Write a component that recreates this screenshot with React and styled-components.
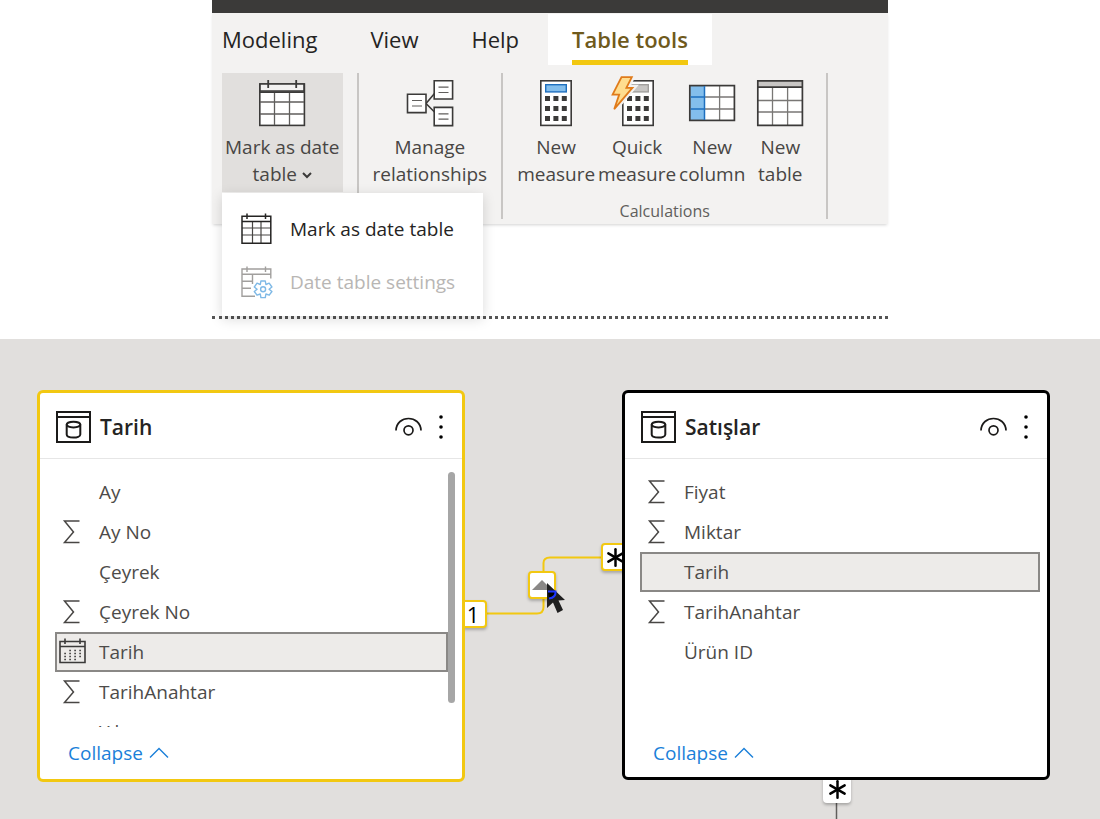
import React from 'react';
import styled, { createGlobalStyle } from 'styled-components';
import { Asterisk } from 'lucide-react';

const GlobalStyle = createGlobalStyle`
    * {
        box-sizing: border-box;
    }
    body {
        margin: 0;
        background-color: #fff;
        font-family: "Open Sans", "Noto Sans", sans-serif;
        color: #252423;
    }
    button {
        margin: 0;
        padding: 0;
        border: none;
        background: none;
        font: inherit;
        color: inherit;
        cursor: pointer;
    }
    svg {
        display: block;
        flex-shrink: 0;
        overflow: visible;
    }
`;

const Page = styled.div`
    display: flex;
    flex-direction: column;
    min-height: 100vh;
`;

const Top = styled.header`
    width: 100%;
    max-width: 676px;
    margin: 0 auto 20px;
    padding-bottom: 92px;
    border-bottom: 3px dotted #555;
`;

const TitleBar = styled.div`
    height: 13px;
    background-color: #3b3a39;
`;

const Ribbon = styled.div`
    background-color: #f3f2f1;
    box-shadow: 0 2px 3px -1px rgba(0, 0, 0, 0.18);
`;

const Tabs = styled.nav`
    display: flex;
    gap: 5px;
    padding-top: 1px;
`;

const Tab = styled.button`
    height: 51px;
    padding: 0 24px;
    font-size: 22px;
    line-height: 50px;
    font-weight: ${props => (props.$active ? 600 : 400)};
    color: ${props => (props.$active ? '#6f5a1c' : '#252423')};
    background-color: ${props => (props.$active ? '#fff' : 'transparent')};
    &:first-child {
        padding-left: 10px;
    }
    & > span {
        display: block;
        height: 51px;
        border-bottom: 5px solid ${props => (props.$active ? '#f2c811' : 'transparent')};
    }
`;

const Groups = styled.div`
    display: flex;
    padding: 8px 0 5px 10px;
`;

const Group = styled.section`
    position: relative;
    height: 146px;
    padding: 0 ${props => props.$gap}px;
    border-right: 2px solid #c8c6c4;
    &:first-child {
        padding-left: 0;
    }
`;

const GroupButtons = styled.div`
    display: flex;
    gap: 3px;
`;

const GroupName = styled.div`
    margin-top: 8px;
    font-size: 16px;
    line-height: 22px;
    text-align: center;
    color: #605e5c;
`;

const RibbonButton = styled.button`
    display: flex;
    flex-direction: column;
    align-items: center;
    gap: 7px;
    min-width: 64px;
    padding: 6px ${props => (props.$open ? 3 : 0)}px 4px;
    font-size: 19px;
    line-height: 27px;
    white-space: nowrap;
    color: #484644;
    background-color: ${props => (props.$open ? '#e1dfdd' : 'transparent')};
`;

const WithChevron = styled.span`
    display: flex;
    align-items: center;
    justify-content: center;
    gap: 5px;
`;

const Menu = styled.div`
    position: absolute;
    top: 120px;
    left: 0;
    z-index: 2;
    width: 261px;
    padding: 9px 0 8px;
    background-color: #fff;
    box-shadow: 0 3px 12px rgba(0, 0, 0, 0.15);
`;

const MenuItem = styled.button`
    display: flex;
    align-items: center;
    gap: 17px;
    width: 100%;
    height: 53px;
    padding-left: 19px;
    font-size: 19px;
    white-space: nowrap;
    &:disabled {
        color: #b8b6b4;
    }
`;

const Canvas = styled.main`
    position: relative;
    flex: 1;
    min-height: 480px;
    overflow: hidden;
    background-color: #e1dfdd;
`;

const Links = styled.svg`
    position: absolute;
    top: 0;
    left: 0;
`;

const Card = styled.article`
    position: absolute;
    top: 51px;
    left: ${props => props.$left}px;
    width: 428px;
    border: 3px solid ${props => props.$color};
    border-radius: 6px;
    background-color: #fff;
`;

const CardHeader = styled.div`
    display: flex;
    align-items: center;
    height: 66px;
    padding: 3px 18px 0 16px;
    border-bottom: 1px solid #e6e6e6;
`;

const CardTitle = styled.h2`
    flex: 1;
    margin: 0 0 0 9px;
    font-size: 21px;
    line-height: 30px;
    font-weight: 600;
`;

const IconButton = styled.button`
    margin-left: 16px;
`;

const CardBody = styled.div`
    display: flex;
    height: 268px;
    padding: 13px 7px 0 15px;
    overflow: hidden;
`;

const FieldList = styled.ul`
    flex: 1;
    margin: 0;
    padding: 0;
    list-style: none;
`;

const Field = styled.li`
    display: flex;
    align-items: center;
    gap: 12px;
    height: 40px;
    border: 2px solid ${props => (props.$selected ? '#8a8886' : 'transparent')};
    background-color: ${props => (props.$selected ? '#edebe9' : 'transparent')};
    font-size: 19px;
    color: #4d4b49;
`;

const FieldIcon = styled.span`
    display: flex;
    justify-content: center;
    width: 30px;
`;

const Scrollbar = styled.div`
    width: 7px;
    height: 231px;
    border-radius: 4px;
    background-color: #a6a6a6;
`;

const CardFooter = styled.div`
    padding: 12px 28px ${props => props.$bottom}px;
`;

const Collapse = styled.button`
    display: flex;
    align-items: center;
    gap: 6px;
    font-size: 19px;
    line-height: 28px;
    color: #1a7fd9;
`;

const Badge = styled.div`
    position: absolute;
    left: ${props => props.$left}px;
    top: ${props => props.$top}px;
    display: flex;
    align-items: center;
    justify-content: center;
    width: 28px;
    height: 28px;
    border: 2px solid ${props => props.$color};
    border-radius: 4px;
    background-color: #fff;
    box-shadow: 0 2px 3px rgba(0, 0, 0, 0.25);
    font-size: 22px;
    line-height: 24px;
    color: #000;
`;

const Cursor = styled.svg`
    position: absolute;
    left: 546px;
    top: 243px;
`;

function CalendarIcon() {
    return (
        <svg width="48" height="48" fill="none" stroke="#3b3a39" strokeWidth="1.6">
            <rect x="1.8" y="5" width="44.6" height="41.4" fill="#fff" />
            <path d="M2 5H46V12H2Z" fill="#f3f2f1" />
            <path d="M16.5 13V46M31.5 13V46M2 23H46M2 35H46" stroke="#605e5c" strokeWidth="1.3" />
            <path d="M1.8 13.2H46.4M10.2 1V9M38.2 1V9" strokeWidth="1.8" />
        </svg>
    );
}

function RelationsIcon() {
    return (
        <svg width="48" height="48" fill="none" stroke="#3b3a39" strokeWidth="1.6">
            <path d="M20 24.5L28.5 14.5M20 24.5L28.5 33" />
            <path d="M1.5 15.2H20V33.6H1.5ZM28.2 1.8H46.6V20H28.2ZM28.2 28.4H46.6V46.6H28.2Z" fill="#fff" />
            <path d="M6 21.5H16M6 27H16M32.5 8.2H42.5M32.5 13.5H42.5M32.5 34.8H42.5M32.5 40.2H42.5" stroke="#605e5c" strokeWidth="1.2" />
        </svg>
    );
}

function Keypad() {
    return [17, 27, 37].map(y =>
        [13, 21.4, 29.8].map(x => <rect key={x + '-' + y} x={x} y={y} width="5" height="5" fill="#3b3a39" />)
    );
}

function MeasureIcon() {
    return (
        <svg width="48" height="48">
            <rect x="8.8" y="1.8" width="30.4" height="44.6" fill="#fff" stroke="#3b3a39" strokeWidth="1.6" />
            <rect x="13.7" y="5.7" width="20.6" height="7.2" fill="#83beec" stroke="#1e6fbe" strokeWidth="1.4" />
            <Keypad />
        </svg>
    );
}

function QuickMeasureIcon() {
    const bolt = 'M8.5 -1.8H18.8L13.4 8.8H19.4L1.2 30.2L6.2 15.6H-0.4Z';
    return (
        <svg width="48" height="48">
            <g transform="translate(1 0)">
                <rect x="8.8" y="1.8" width="30.4" height="44.6" fill="#fff" stroke="#3b3a39" strokeWidth="1.6" />
                <rect x="13.7" y="5.7" width="20.6" height="7.2" fill="#c8c6c4" stroke="#a19f9d" strokeWidth="1.4" />
                <Keypad />
            </g>
            <path d={bolt} fill="#f3f2f1" stroke="#f3f2f1" strokeWidth="6" />
            <path d={bolt} fill="#ffdd8f" stroke="#e07b1a" strokeWidth="1.8" />
        </svg>
    );
}

function ColumnIcon() {
    return (
        <svg width="48" height="48" fill="none">
            <rect x="1.8" y="6.6" width="44.6" height="34.8" fill="#fff" />
            <rect x="2" y="7" width="14.5" height="34" fill="#83beec" />
            <path d="M31.6 7V41M16.5 18H46M16.5 30H46" stroke="#797775" strokeWidth="1.3" />
            <rect x="1.8" y="6.6" width="44.6" height="34.8" stroke="#3b3a39" strokeWidth="1.7" />
            <path d="M16.5 7V41M2.6 18H16.5M2.6 30H16.5" stroke="#1e6fbe" strokeWidth="1.5" />
        </svg>
    );
}

function TableIcon() {
    return (
        <svg width="48" height="48" fill="none">
            <rect x="1.8" y="1.8" width="44.6" height="44.6" fill="#fff" />
            <rect x="2" y="2" width="44" height="6" fill="#c8c6c4" />
            <path d="M16.5 8V46M31.6 8V46M2 21.5H46M2 33H46" stroke="#797775" strokeWidth="1.3" />
            <path d="M1.8 1.8H46.4V46.4H1.8ZM1.8 8.2H46.4" stroke="#3b3a39" strokeWidth="1.7" />
        </svg>
    );
}

function MenuCalendarIcon() {
    return (
        <svg width="32" height="32" fill="none" stroke="#252423" strokeWidth="1.5">
            <path d="M11.5 8V30M20 8V30M1 15H30M1 22H30" strokeWidth="1.2" stroke="#484644" />
            <path d="M1 3.2H29.8V30.2H1ZM1 8.4H29.8M6 0.5V6M24.5 0.5V6" />
        </svg>
    );
}

function CalendarSettingsIcon() {
    return (
        <svg width="32" height="32" fill="none" stroke="#a19f9d" strokeWidth="1.4">
            <path d="M29.8 12.5V3H1V30.2H14M1 8.2H29.8M6 0.5V6M24.5 0.5V6M11.5 8.2V18M1 15.2H12M1 22.2H10" />
            <g stroke="#7fb9e6" strokeWidth="1.4" strokeLinejoin="round">
                <path d="M19.3 18.5L19.9 15H24.3L24.9 18.5L28.2 17.2L30.9 21L28.1 23.2L30.9 25.5L28.2 29.2L24.9 28L24.3 31.6H19.9L19.3 28L16 29.2L13.3 25.5L16.1 23.2L13.3 21L16 17.2Z" />
                <circle cx="22.1" cy="23.3" r="2.5" />
            </g>
        </svg>
    );
}

function TableNodeIcon() {
    return (
        <svg width="35" height="32" fill="none" stroke="#1b1a19" strokeWidth="2">
            <path d="M1 1H34V31H1ZM1 6H34" />
            <ellipse cx="17.5" cy="13.6" rx="6.8" ry="2.8" />
            <path d="M10.7 13.6V23.5C10.7 27.6 24.3 27.6 24.3 23.5V13.6" />
        </svg>
    );
}

function EyeIcon() {
    return (
        <svg width="27" height="20" fill="none" stroke="#1b1a19" strokeWidth="1.7">
            <path d="M1 13.5C1.5 -2.5 25.5 -2.5 26 13.5" />
            <circle cx="13.5" cy="13.3" r="4.5" />
        </svg>
    );
}

function DotsIcon() {
    return (
        <svg width="6" height="26" fill="#000">
            <circle cx="3" cy="3" r="1.8" />
            <circle cx="3" cy="13" r="1.8" />
            <circle cx="3" cy="23" r="1.8" />
        </svg>
    );
}

function SigmaIcon() {
    return (
        <svg width="18" height="24" fill="none" stroke="#484644" strokeWidth="1.5">
            <path d="M16.5 1H1.5L10.5 12L1.5 22.5H16.5" />
        </svg>
    );
}

function DateFieldIcon() {
    return (
        <svg width="27" height="28" fill="none" stroke="#3b3a39" strokeWidth="1.6">
            <path d="M1 3.5H26V24.5H1ZM1 8.5H26M6 0.5V6M21 0.5V6" />
            <path d="M10.3 12.5H23M5.3 15.5H23M5.3 18.5H23M5.3 21.5H18" strokeWidth="1.5" strokeDasharray="1.6 3.4" />
        </svg>
    );
}

const fieldIcons = { sum: SigmaIcon, date: DateFieldIcon };

const calculations = [
    { first: 'New', second: 'measure', Icon: MeasureIcon },
    { first: 'Quick', second: 'measure', Icon: QuickMeasureIcon },
    { first: 'New', second: 'column', Icon: ColumnIcon },
    { first: 'New', second: 'table', Icon: TableIcon },
];

const dateFields = [
    { name: 'Ay' },
    { name: 'Ay No', icon: 'sum' },
    { name: 'Çeyrek' },
    { name: 'Çeyrek No', icon: 'sum' },
    { name: 'Tarih', icon: 'date', selected: true },
    { name: 'TarihAnahtar', icon: 'sum' },
    { name: 'Yıl' },
];

const salesFields = [
    { name: 'Fiyat', icon: 'sum' },
    { name: 'Miktar', icon: 'sum' },
    { name: 'Tarih', selected: true },
    { name: 'TarihAnahtar', icon: 'sum' },
    { name: 'Ürün ID' },
];

function TableCard({ title, fields, left, color, scroll, bottom }) {
    return (
        <Card $left={left} $color={color}>
            <CardHeader>
                <TableNodeIcon />
                <CardTitle>{title}</CardTitle>
                <IconButton aria-label="Hide table"><EyeIcon /></IconButton>
                <IconButton aria-label="More options"><DotsIcon /></IconButton>
            </CardHeader>
            <CardBody>
                <FieldList>
                    {fields.map(field => {
                        const Icon = fieldIcons[field.icon];
                        return (
                            <Field key={field.name} $selected={field.selected}>
                                <FieldIcon>{Icon && <Icon />}</FieldIcon>
                                {field.name}
                            </Field>
                        );
                    })}
                </FieldList>
                {scroll && <Scrollbar />}
            </CardBody>
            <CardFooter $bottom={bottom}>
                <Collapse>
                    Collapse
                    <svg width="20" height="12" fill="none" stroke="#1a7fd9" strokeWidth="1.4">
                        <path d="M1 10.5L10 1.5L19 10.5" />
                    </svg>
                </Collapse>
            </CardFooter>
        </Card>
    );
}

function App() {
    return (
        <Page>
            <GlobalStyle />
            <Top>
                <TitleBar />
                <Ribbon>
                    <Tabs>
                        <Tab><span>Modeling</span></Tab>
                        <Tab><span>View</span></Tab>
                        <Tab><span>Help</span></Tab>
                        <Tab $active><span>Table tools</span></Tab>
                    </Tabs>
                    <Groups>
                        <Group $gap={14}>
                            <RibbonButton $open aria-haspopup="menu" aria-expanded="true">
                                <CalendarIcon />
                                <span>
                                    Mark as date
                                    <WithChevron>
                                        table
                                        <svg width="10" height="8" fill="none" stroke="#3b3a39" strokeWidth="2">
                                            <path d="M1 2L5 6L9 2" />
                                        </svg>
                                    </WithChevron>
                                </span>
                            </RibbonButton>
                            <Menu>
                                <MenuItem><MenuCalendarIcon />Mark as date table</MenuItem>
                                <MenuItem disabled><CalendarSettingsIcon />Date table settings</MenuItem>
                            </Menu>
                        </Group>
                        <Group $gap={14}>
                            <RibbonButton>
                                <RelationsIcon />
                                <span>Manage<br />relationships</span>
                            </RibbonButton>
                        </Group>
                        <Group $gap={14}>
                            <GroupButtons>
                                {calculations.map(({ first, second, Icon }) =>
                                    <RibbonButton key={first + second}>
                                        <Icon />
                                        <span>{first}<br />{second}</span>
                                    </RibbonButton>
                                )}
                            </GroupButtons>
                            <GroupName>Calculations</GroupName>
                        </Group>
                    </Groups>
                </Ribbon>
            </Top>
            <Canvas>
                <Links width="1100" height="480" fill="none">
                    <path d="M486 274.5H537Q543.5 274.5 543.5 268V224Q543.5 218.5 550 218.5H604" stroke="#f2c811" strokeWidth="2" />
                    <path d="M836.5 460V480" stroke="#605e5c" strokeWidth="1.5" />
                </Links>
                <Badge $left={459} $top={261} $color="#f2c811">1</Badge>
                <Badge $left={601} $top={204} $color="#f2c811"><Asterisk size={33} strokeWidth={1.8} /></Badge>
                <Badge $left={823} $top={436} $color="#fff"><Asterisk size={33} strokeWidth={1.8} /></Badge>
                <Badge $left={528} $top={232} $color="#f2c811">
                    <svg width="20" height="10" fill="#8a8886">
                        <path d="M0 10L10 0L20 10Z" />
                    </svg>
                </Badge>
                <TableCard title="Tarih" fields={dateFields} left={37} color="#f2c811" scroll bottom={12} />
                <TableCard title="Satışlar" fields={salesFields} left={622} color="#000" bottom={10} />
                <Cursor width="22" height="32">
                    <path d="M1 1L19 18L12.5 18.5L17 28L11.5 31L7 20.5L1 26Z" fill="#1f1f1f" />
                    <path d="M2 9.5H9.5Q10 15.5 3 16.5" fill="#000" stroke="#1c35ff" strokeWidth="2" />
                </Cursor>
            </Canvas>
        </Page>
    );
}

export default App;
